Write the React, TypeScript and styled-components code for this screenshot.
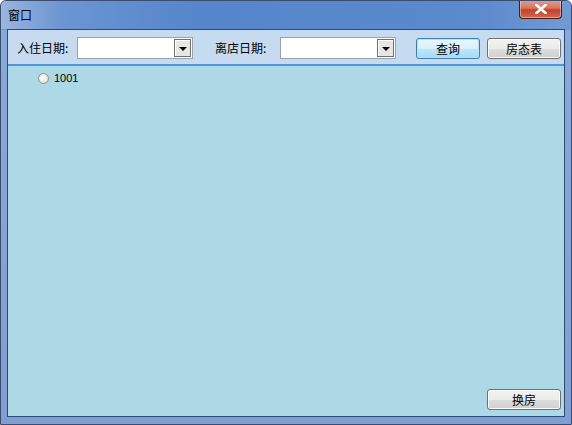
import * as React from 'react';
import styled, { createGlobalStyle } from 'styled-components';

const GlobalStyle = createGlobalStyle`
  html, body {
    margin: 0;
    padding: 0;
    background: #ffffff;
  }
  body {
    font-family: 'Noto Sans CJK SC', 'DejaVu Sans', sans-serif;
    font-size: 12px;
  }
`;

const Window = styled.div`
  width: 572px;
  height: 425px;
  box-sizing: border-box;
  border: 1px solid #3a4d6e;
  border-radius: 6px 6px 0 0;
  background: linear-gradient(180deg, #5c8bcf 0px, #5586cb 28px, #89a9d8 29px, #7f9fd2 100%);
  display: flex;
  flex-direction: column;
  overflow: hidden;
`;

const TitleBar = styled.div`
  height: 28px;
  flex: none;
  display: flex;
  align-items: flex-start;
  padding-left: 7px;
  background: linear-gradient(90deg, #9bb6de 0px, #6c95d2 60px, #5585cb 200px, #5b8acd 480px, #6f9ad4 560px);
`;

const Title = styled.span`
  margin-top: 6px;
  color: #000;
  font-size: 12px;
  line-height: 15px;
`;

const CloseButton = styled.div`
  margin-left: auto;
  margin-right: 9px;
  margin-top: -1px;
  width: 43px;
  height: 19px;
  box-sizing: border-box;
  border: 1px solid #4a1a14;
  border-top: none;
  border-radius: 0 0 4px 4px;
  background: linear-gradient(180deg, #e2a08f 0%, #d6765f 45%, #c1422a 55%, #cf6a4e 100%);
  box-shadow: inset 0 0 0 1px rgba(255, 220, 210, 0.5);
  display: flex;
  align-items: center;
  justify-content: center;
`;

const Client = styled.div`
  flex: 1;
  margin: 0 6px 7px 6px;
  border: 1px solid #2f4a72;
  display: flex;
  flex-direction: column;
  min-height: 0;
`;

const Toolbar = styled.div`
  height: 34px;
  flex: none;
  display: flex;
  align-items: center;
  padding-left: 9px;
  background: #c6dbef;
  border-bottom: 2px solid #4e97dc;
`;

const Label = styled.span<{ $gap?: number; $width: number }>`
  margin-left: ${({ $gap }) => $gap ?? 0}px;
  width: ${({ $width }) => $width}px;
  color: #000;
  font-size: 12px;
  white-space: nowrap;
`;

const Combo = styled.div`
  width: 116px;
  height: 22px;
  box-sizing: border-box;
  border: 1px solid #9aa3ad;
  background: #ffffff;
  display: flex;
  justify-content: flex-end;
  align-items: center;
  padding-right: 1px;
  margin-top: 2px;
`;

const DropButton = styled.div`
  width: 17px;
  height: 18px;
  box-sizing: border-box;
  border: 1px solid #6f6f6f;
  background: #e6e6e6;
  box-shadow: inset 1px 1px 0 #ffffff;
  display: flex;
  align-items: center;
  justify-content: center;
`;

const Arrow = styled.div`
  width: 0;
  height: 0;
  border-left: 4px solid transparent;
  border-right: 4px solid transparent;
  border-top: 4px solid #000;
  margin-top: 2px;
`;

const Button = styled.button<{ $width: number; $focused?: boolean; $gap?: number }>`
  width: ${({ $width }) => $width}px;
  height: 21px;
  margin-left: ${({ $gap }) => $gap ?? 0}px;
  margin-top: 2px;
  padding: 0;
  box-sizing: border-box;
  border: 1px solid ${({ $focused }) => ($focused ? '#3c7fb1' : '#707070')};
  border-radius: 3px;
  background: ${({ $focused }) =>
    $focused
      ? 'linear-gradient(180deg, #eaf6fd 0%, #d9f0fc 50%, #bee6fd 51%, #a7d9f5 100%)'
      : 'linear-gradient(180deg, #f2f2f2 0%, #ebebeb 50%, #dddddd 51%, #cfcfcf 100%)'};
  box-shadow: inset 0 0 0 1px ${({ $focused }) => ($focused ? '#b6e0f7' : '#fbfbfb')};
  font-family: 'Noto Sans CJK SC', 'DejaVu Sans', sans-serif;
  font-size: 12px;
  color: #000;
  line-height: 19px;
`;

const Body = styled.div`
  flex: 1;
  background: #add8e6;
  display: flex;
  flex-direction: column;
  padding: 6px 0 6px 30px;
  min-height: 0;
`;

const RadioRow = styled.label`
  display: flex;
  align-items: center;
  gap: 5px;
  font-family: 'Liberation Sans', 'DejaVu Sans', sans-serif;
  font-size: 11px;
  color: #000;
`;

const RadioDot = styled.span`
  width: 11px;
  height: 11px;
  box-sizing: border-box;
  border-radius: 50%;
  border: 1px solid #8e8f8f;
  background: radial-gradient(circle at 40% 40%, #ffffff 0%, #eeeeee 45%, #cfcfcf 100%);
`;

const Footer = styled.div`
  margin-top: auto;
  display: flex;
  justify-content: flex-end;
  padding-right: 3px;
`;

export default function App() {
  return (
    <>
      <GlobalStyle />
      <Window>
        <TitleBar>
          <Title>窗口</Title>
          <CloseButton>
            <svg width="12" height="10" viewBox="0 0 12 10">
              <path d="M1.5 1 L10.5 9 M10.5 1 L1.5 9" stroke="#ffffff" strokeWidth="2.6" strokeLinecap="square" />
            </svg>
          </CloseButton>
        </TitleBar>
        <Client>
          <Toolbar>
            <Label $width={60}>入住日期:</Label>
            <Combo>
              <DropButton>
                <Arrow />
              </DropButton>
            </Combo>
            <Label $width={65} $gap={22}>离店日期:</Label>
            <Combo>
              <DropButton>
                <Arrow />
              </DropButton>
            </Combo>
            <Button $width={64} $focused $gap={20}>查询</Button>
            <Button $width={74} $gap={7}>房态表</Button>
          </Toolbar>
          <Body>
            <RadioRow>
              <RadioDot />
              1001
            </RadioRow>
            <Footer>
              <Button $width={74}>换房</Button>
            </Footer>
          </Body>
        </Client>
      </Window>
    </>
  );
}
